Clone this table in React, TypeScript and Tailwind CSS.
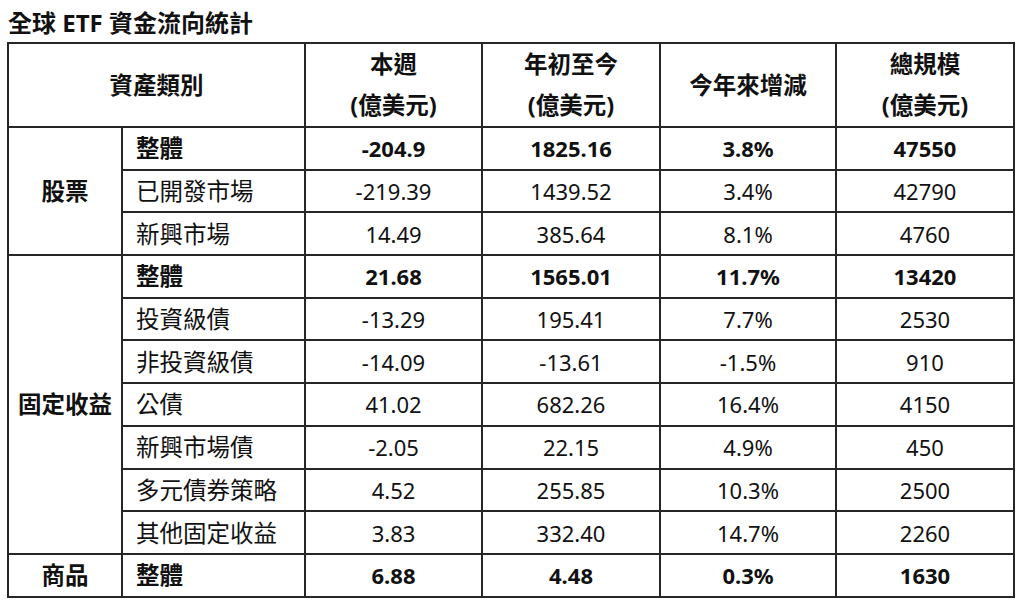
const font = { fontFamily: '"Noto Sans", "Noto Sans CJK TC", sans-serif' };

type Row = { name: string; week: string; ytd: string; pct: string; aum: string; bold?: boolean };

const groups: { label: string; rows: Row[] }[] = [
  {
    label: "股票",
    rows: [
      { name: "整體", week: "-204.9", ytd: "1825.16", pct: "3.8%", aum: "47550", bold: true },
      { name: "已開發市場", week: "-219.39", ytd: "1439.52", pct: "3.4%", aum: "42790" },
      { name: "新興市場", week: "14.49", ytd: "385.64", pct: "8.1%", aum: "4760" },
    ],
  },
  {
    label: "固定收益",
    rows: [
      { name: "整體", week: "21.68", ytd: "1565.01", pct: "11.7%", aum: "13420", bold: true },
      { name: "投資級債", week: "-13.29", ytd: "195.41", pct: "7.7%", aum: "2530" },
      { name: "非投資級債", week: "-14.09", ytd: "-13.61", pct: "-1.5%", aum: "910" },
      { name: "公債", week: "41.02", ytd: "682.26", pct: "16.4%", aum: "4150" },
      { name: "新興市場債", week: "-2.05", ytd: "22.15", pct: "4.9%", aum: "450" },
      { name: "多元債券策略", week: "4.52", ytd: "255.85", pct: "10.3%", aum: "2500" },
      { name: "其他固定收益", week: "3.83", ytd: "332.40", pct: "14.7%", aum: "2260" },
    ],
  },
  {
    label: "商品",
    rows: [{ name: "整體", week: "6.88", ytd: "4.48", pct: "0.3%", aum: "1630", bold: true }],
  },
];

const cell = "border-2 border-[#262626] text-[#111] leading-[28px] p-0";
const zh = "text-[23.5px]";
const num = "text-[22px] text-center";

export default function App() {
  return (
    <div className="w-[1024px] h-[611px] bg-white overflow-hidden" style={font}>
      <div className="pl-[8px] pt-[8px] h-[42px] text-[24px] font-bold text-[#111] leading-[30px]">
        全球 ETF 資金流向統計
      </div>
      <table className="ml-[7px] w-[1006px] border-collapse table-fixed">
        <colgroup>
          <col className="w-[114px]" />
          <col className="w-[183px]" />
          <col className="w-[177px]" />
          <col className="w-[178px]" />
          <col className="w-[176px]" />
          <col className="w-[178px]" />
        </colgroup>
        <thead>
          <tr className="h-[84px]">
            <th colSpan={2} className={`${cell} ${zh} font-bold`}>資產類別</th>
            <th className={`${cell} ${zh} font-bold leading-[41px]`}>本週<br />(億美元)</th>
            <th className={`${cell} ${zh} font-bold leading-[41px]`}>年初至今<br />(億美元)</th>
            <th className={`${cell} ${zh} font-bold`}>今年來增減</th>
            <th className={`${cell} ${zh} font-bold leading-[41px]`}>總規模<br />(億美元)</th>
          </tr>
        </thead>
        <tbody>
          {groups.map((g) =>
            g.rows.map((r, i) => (
              <tr key={g.label + r.name + i} className="h-[42.7px]">
                {i === 0 && (
                  <td rowSpan={g.rows.length} className={`${cell} ${zh} font-bold text-center`}>
                    {g.label}
                  </td>
                )}
                <td className={`${cell} ${zh} pl-[13px] ${r.bold ? "font-bold" : ""}`}>{r.name}</td>
                <td className={`${cell} ${num} ${r.bold ? "font-bold" : ""}`}>{r.week}</td>
                <td className={`${cell} ${num} ${r.bold ? "font-bold" : ""}`}>{r.ytd}</td>
                <td className={`${cell} ${num} ${r.bold ? "font-bold" : ""}`}>{r.pct}</td>
                <td className={`${cell} ${num} ${r.bold ? "font-bold" : ""}`}>{r.aum}</td>
              </tr>
            ))
          )}
        </tbody>
      </table>
    </div>
  );
}
